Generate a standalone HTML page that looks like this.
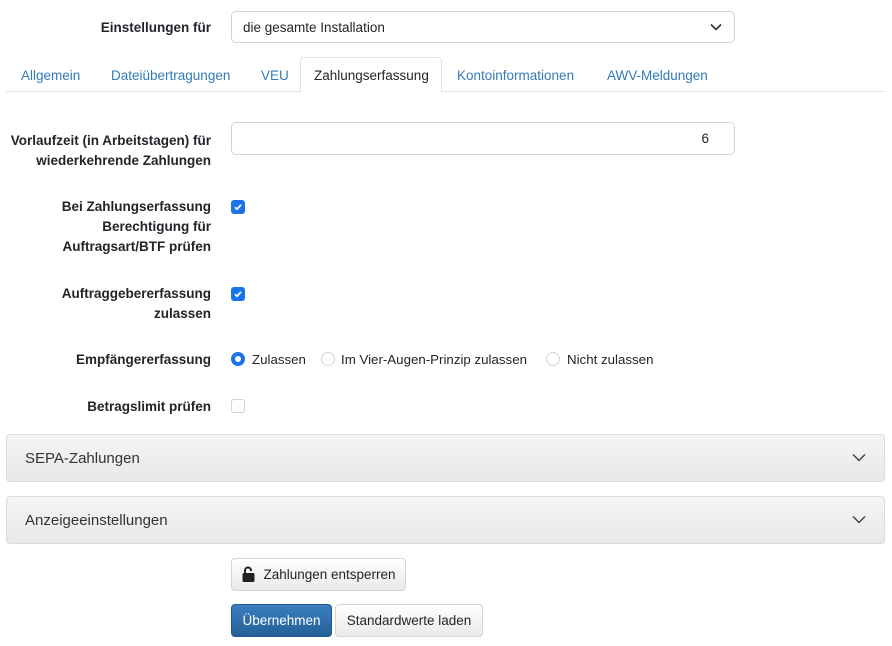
<!DOCTYPE html>
<html><head><meta charset="utf-8"><style>
body{margin:0;width:892px;height:646px;background:#fff;font-family:"Liberation Sans",sans-serif;font-size:14px;color:#212529;position:relative;overflow:hidden}
.a{position:absolute}
.lbl{position:absolute;right:681px;text-align:right;font-weight:bold;font-size:13.5px;line-height:20px;white-space:nowrap}
.box{position:absolute;border:1px solid #ced4da;border-radius:5px;background:#fff;box-sizing:border-box}
.tab{position:absolute;top:68px;color:#337ab7;font-size:13.5px}
.cb{position:absolute;left:231px;width:14px;height:14px;border-radius:3px;background:#1a73e8;box-sizing:border-box}
.cb svg{position:absolute;left:2px;top:2px}
.rad{position:absolute;top:352px;width:14px;height:14px;border-radius:50%;box-sizing:border-box;border:1px solid #ced4da;background:#fff}
.rt{position:absolute;top:352px;font-size:13.3px}
.panel{position:absolute;left:6px;width:879px;height:48px;border:1px solid #dcdcdc;border-radius:4px;box-sizing:border-box;background:linear-gradient(#f5f5f5,#e8e8e8)}
.panel span{position:absolute;left:18px;top:15px;font-size:15px;color:#333}
.panel svg{position:absolute;right:18px;top:18px}
.btn{position:absolute;border-radius:4px;box-sizing:border-box;font-size:13.5px;text-align:center}
</style></head><body>
<div class="lbl" style="top:18px">Einstellungen für</div>
<div class="box" style="left:231px;top:11px;width:504px;height:32px"><span class="a" style="left:11px;top:8px;font-size:13.5px">die gesamte Installation</span>
<svg class="a" style="right:12px;top:11px" width="12" height="8" viewBox="0 0 12 8"><path d="M1 1.5l5 5 5-5" stroke="#333" stroke-width="1.6" fill="none"/></svg></div>

<div class="a" style="left:6px;top:91px;width:879px;height:1px;background:#dee2e6"></div>
<div class="a" style="left:300px;top:57px;width:142px;height:35px;border:1px solid #dee2e6;border-bottom:none;border-radius:4px 4px 0 0;background:#fff;box-sizing:border-box"></div>
<div class="tab" style="left:21px">Allgemein</div>
<div class="tab" style="left:111px">Dateiübertragungen</div>
<div class="tab" style="left:261px">VEU</div>
<div class="tab" style="left:314px;color:#212529">Zahlungserfassung</div>
<div class="tab" style="left:457px">Kontoinformationen</div>
<div class="tab" style="left:607px">AWV-Meldungen</div>

<div class="lbl" style="top:131px">Vorlaufzeit (in Arbeitstagen) für<br>wiederkehrende Zahlungen</div>
<div class="box" style="left:231px;top:122px;width:504px;height:33px"><span class="a" style="right:25px;top:8px;font-size:13.5px">6</span></div>

<div class="lbl" style="top:197px">Bei Zahlungserfassung<br>Berechtigung für<br>Auftragsart/BTF prüfen</div>
<div class="cb" style="top:200px"><svg width="10" height="10" viewBox="0 0 10 10"><path d="M2 5.2l2 2 4-4.4" stroke="#fff" stroke-width="1.8" fill="none"/></svg></div>

<div class="lbl" style="top:284px">Auftraggebererfassung<br>zulassen</div>
<div class="cb" style="top:287px"><svg width="10" height="10" viewBox="0 0 10 10"><path d="M2 5.2l2 2 4-4.4" stroke="#fff" stroke-width="1.8" fill="none"/></svg></div>

<div class="lbl" style="top:350px">Empfängererfassung</div>
<div class="rad" style="left:231px;border:4px solid #1a73e8"></div>
<div class="rt" style="left:252px">Zulassen</div>
<div class="rad" style="left:321px"></div>
<div class="rt" style="left:341px">Im Vier-Augen-Prinzip zulassen</div>
<div class="rad" style="left:546px"></div>
<div class="rt" style="left:567px">Nicht zulassen</div>

<div class="lbl" style="top:397px">Betragslimit prüfen</div>
<div class="a" style="left:231px;top:399px;width:14px;height:14px;border:1px solid #ced4da;border-radius:3px;box-sizing:border-box"></div>

<div class="panel" style="top:434px"><span>SEPA-Zahlungen</span><svg width="14" height="9" viewBox="0 0 14 9"><path d="M1 1.5l6 6 6-6" stroke="#444" stroke-width="1.5" fill="none"/></svg></div>
<div class="panel" style="top:496px"><span>Anzeigeeinstellungen</span><svg width="14" height="9" viewBox="0 0 14 9"><path d="M1 1.5l6 6 6-6" stroke="#444" stroke-width="1.5" fill="none"/></svg></div>

<div class="btn" style="left:231px;top:558px;width:175px;height:33px;border:1px solid #d5d5d5;background:linear-gradient(#fff,#e9e9e9);line-height:31px;padding-left:22px">Zahlungen entsperren</div>
<svg class="a" style="left:242px;top:566px" width="13" height="16" viewBox="0 0 13 16"><path d="M3 7V4.5a3 3 0 0 1 6 0V5" stroke="#222" stroke-width="2" fill="none"/><rect x="0.5" y="7" width="12" height="9" rx="1.5" fill="#222"/></svg>

<div class="btn" style="left:231px;top:604px;width:101px;height:33px;background:linear-gradient(#3a7fc0,#255f97);border:1px solid #245a8e;color:#fff;line-height:31px">Übernehmen</div>
<div class="btn" style="left:335px;top:604px;width:148px;height:33px;border:1px solid #d5d5d5;background:linear-gradient(#fff,#e9e9e9);line-height:31px">Standardwerte laden</div>
</body></html>
